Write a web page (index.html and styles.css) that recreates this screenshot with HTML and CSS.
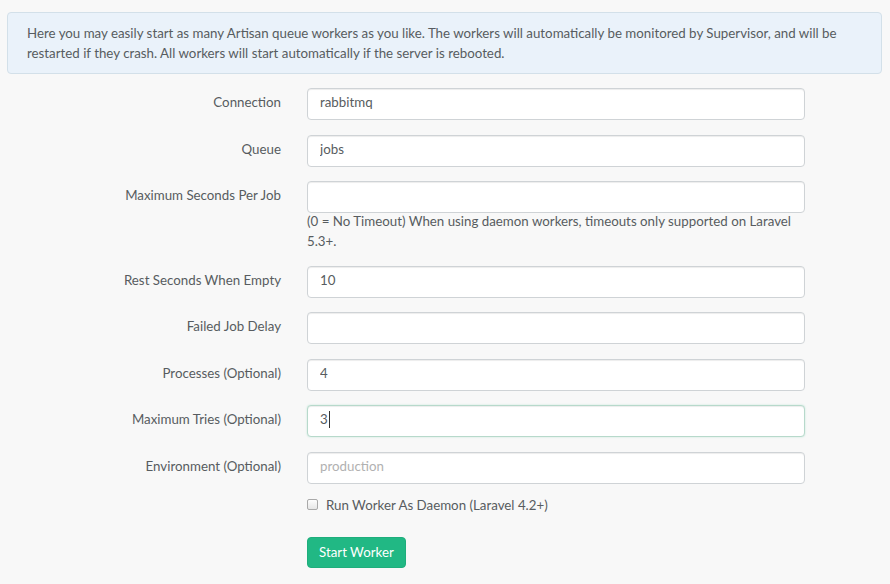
FILE: index.html
```html
<!DOCTYPE html>
<html>
<head>
<meta charset="utf-8">
<link rel="stylesheet" href="styles.css">
</head>
<body>
<div class="page">
  <div class="alert">Here you may easily start as many Artisan queue workers as you like. The workers will automatically be monitored by Supervisor, and will be restarted if they crash. All workers will start automatically if the server is rebooted.</div>

  <form class="form">
    <div class="group">
      <label class="label">Connection</label>
      <div class="field"><input class="control" type="text" value="rabbitmq"></div>
    </div>
    <div class="group">
      <label class="label">Queue</label>
      <div class="field"><input class="control" type="text" value="jobs"></div>
    </div>
    <div class="group">
      <label class="label">Maximum Seconds Per Job</label>
      <div class="field">
        <input class="control" type="text" value="">
        <p class="help">(0 = No Timeout) When using daemon workers, timeouts only supported on Laravel 5.3+.</p>
      </div>
    </div>
    <div class="group">
      <label class="label">Rest Seconds When Empty</label>
      <div class="field"><input class="control" type="text" value="10"></div>
    </div>
    <div class="group">
      <label class="label">Failed Job Delay</label>
      <div class="field"><input class="control" type="text" value=""></div>
    </div>
    <div class="group">
      <label class="label">Processes (Optional)</label>
      <div class="field"><input class="control" type="text" value="4"></div>
    </div>
    <div class="group">
      <label class="label">Maximum Tries (Optional)</label>
      <div class="field"><div class="control focus">3<span class="caret"></span></div></div>
    </div>
    <div class="group">
      <label class="label">Environment (Optional)</label>
      <div class="field"><input class="control" type="text" placeholder="production"></div>
    </div>
    <div class="group check-group">
      <span></span>
      <label class="check"><span class="box"></span>Run Worker As Daemon (Laravel 4.2+)</label>
    </div>
    <div class="group">
      <span></span>
      <div class="field"><button type="button" class="btn">Start Worker</button></div>
    </div>
  </form>
</div>
</body>
</html>
```

FILE: styles.css
```css
html, body {
  margin: 0;
  padding: 0;
  background: #f8f8f8;
}
body {
  font-family: "Lato", "Open Sans", sans-serif;
  font-size: 13.3px;
  line-height: 20px;
  color: #575c60;
}
.page {
  padding: 12px 8px 0 7px;
}
.alert {
  background: #eaf2fa;
  border: 1px solid #d3e0e9;
  border-radius: 4px;
  padding: 10px 19px;
  color: #575c60;
}
.form {
  margin-top: 14px;
}
.group {
  display: grid;
  grid-template-columns: 274px 498px;
  column-gap: 26px;
  margin-bottom: 14.5px;
}
.label {
  text-align: right;
  padding-top: 4px;
}
.field {
  min-width: 0;
}
.control {
  display: block;
  box-sizing: border-box;
  width: 100%;
  height: 32px;
  margin: 0;
  padding: 3px 12px 7px;
  font-family: inherit;
  font-size: 13.3px;
  line-height: 20px;
  color: #575c60;
  background: #fff;
  border: 1px solid #cfd3d6;
  border-radius: 4px;
  box-shadow: inset 0 1px 1px rgba(0,0,0,0.075);
  outline: none;
}
.control::placeholder {
  color: #b1b1b1;
}
.control.focus {
  border-color: #b7d9cb;
  box-shadow: inset 0 1px 1px rgba(0,0,0,0.075), 0 0 2px rgba(33,185,131,0.25);
}
.caret {
  display: inline-block;
  width: 1px;
  height: 17px;
  background: #333;
  vertical-align: -4px;
  margin-left: 1px;
}
.help {
  margin: -2px 0 0 0;
  color: #575c60;
}
.check-group {
  margin-top: -3.5px;
  margin-bottom: 22px;
}
.check {
  display: flex;
  align-items: center;
  gap: 8px;
}
.box {
  display: inline-block;
  box-sizing: border-box;
  width: 11px;
  height: 11px;
  border: 1px solid #a9a9a9;
  border-radius: 2px;
  background: linear-gradient(#fdfdfd, #e6e6e6);
}
.btn {
  font-family: inherit;
  font-size: 13.3px;
  line-height: 20px;
  color: #fff;
  background: #21b884;
  border: 1px solid #1fae7c;
  border-radius: 4px;
  padding: 4px 11px 6px;
  height: 31px;
  cursor: pointer;
}
```
